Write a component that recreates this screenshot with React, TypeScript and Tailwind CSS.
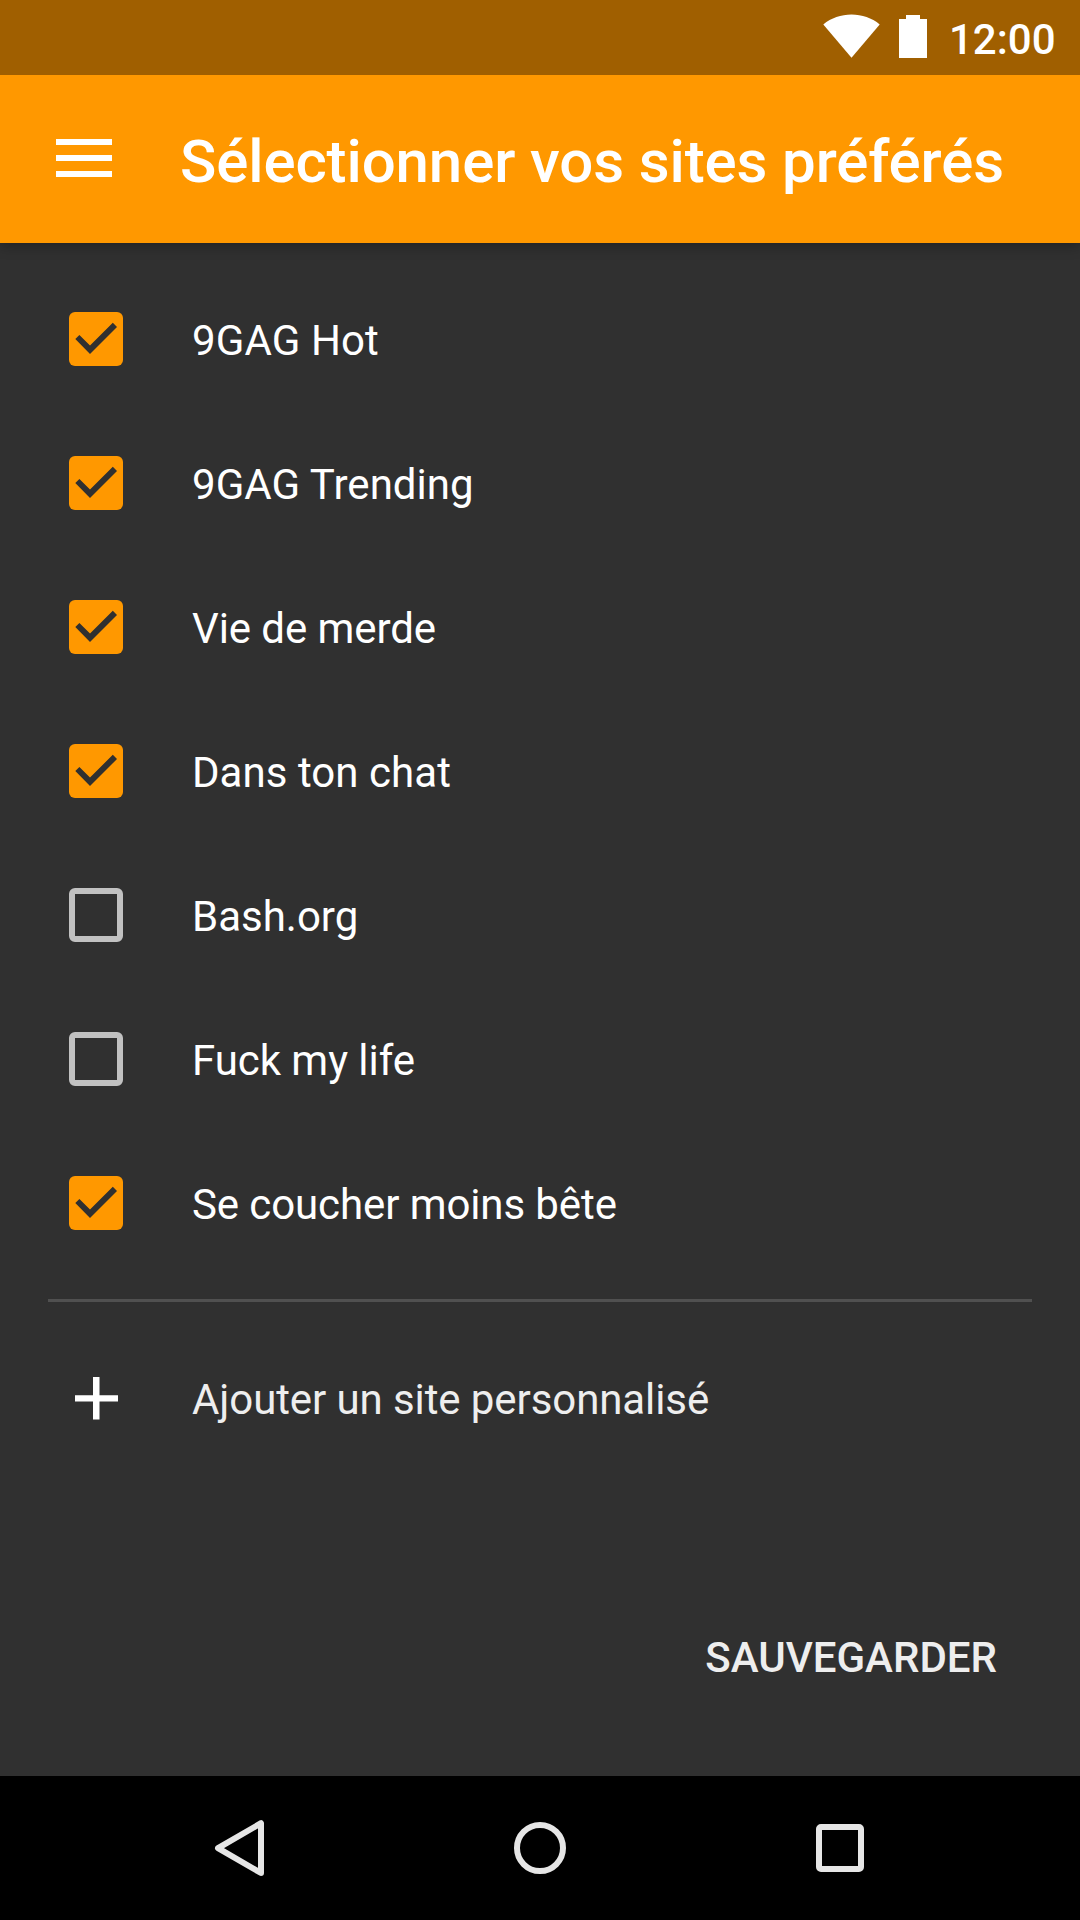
import React from "react";

const sites = [
  { name: "9GAG Hot", checked: true, tracking: "tracking-[0.1px]" },
  { name: "9GAG Trending", checked: true, tracking: "tracking-[0.05px]" },
  { name: "Vie de merde", checked: true, tracking: "tracking-[-0.08px]" },
  { name: "Dans ton chat", checked: true, tracking: "tracking-[0.05px]" },
  { name: "Bash.org", checked: false, tracking: "tracking-normal" },
  { name: "Fuck my life", checked: false, tracking: "tracking-[-0.05px]" },
  { name: "Se coucher moins bête", checked: true, tracking: "tracking-[-0.1px]" },
];

function Checkbox({ checked }: { checked: boolean }) {
  return checked ? (
    <svg className="size-[54px] shrink-0" viewBox="0 0 54 54">
      <rect width="54" height="54" rx="6" fill="#ff9800" />
      <path d="M6.3 27L10.4 22.9L21 33.5L43.8 10.8L48 15L21 42Z" fill="#303030" />
    </svg>
  ) : (
    <div className="size-[54px] shrink-0 rounded-[6px] border-6 border-[#c1c1c1]" />
  );
}

function StatusBar() {
  return (
    <div className="relative z-10 flex h-[75px] items-center bg-[#a05f00] pl-[823px]">
      <svg className="h-[75px] w-[57px] shrink-0" viewBox="0 0 57 75" fill="#fff">
        <path d="M28.5 57.7L0.3 24.4C8.3 18 18 14.6 28.5 14.6S48.7 18 56.7 24.4Z" />
      </svg>
      <svg className="ml-[19px] h-[75px] w-[28px] shrink-0" viewBox="0 0 28 75" fill="#fff">
        <path d="M7 15H21V19H28V58H0V19H7Z" />
      </svg>
      <span className="ml-[22px] pt-[4px] text-[42px] leading-none font-medium">12:00</span>
    </div>
  );
}

function AppBar() {
  return (
    <header className="relative flex h-[168px] items-center bg-[#ff9800] pl-[56px] shadow-[0_3px_12px_rgba(0,0,0,0.3)]">
      <svg className="mb-[2px] h-[38px] w-[56px] shrink-0" viewBox="0 0 56 38" fill="#fff">
        <path d="M0 0H56V6H0ZM0 16H56V22H0ZM0 32H56V38H0Z" />
      </svg>
      <h1 className="ml-[68px] pt-[5px] text-[60px] leading-[70px] font-medium tracking-[-0.12px] whitespace-nowrap">
        Sélectionner vos sites préférés
      </h1>
    </header>
  );
}

function NavigationBar() {
  return (
    <nav className="flex h-[144px] items-center justify-between bg-black pr-[204px] pl-[204px]">
      <svg className="size-[72px]" viewBox="0 0 72 72" fill="none" stroke="#e6e6e6" strokeWidth="6" strokeLinejoin="round">
        <path d="M57 11.2V61L14 36.1Z" />
      </svg>
      <svg className="size-[72px]" viewBox="0 0 72 72" fill="none" stroke="#e6e6e6" strokeWidth="6">
        <circle cx="36" cy="36" r="23" />
      </svg>
      <svg className="size-[72px]" viewBox="0 0 72 72" fill="none" stroke="#e6e6e6" strokeWidth="6" strokeLinejoin="round">
        <rect x="15" y="15" width="42" height="42" rx="2" />
      </svg>
    </nav>
  );
}

export default function App() {
  return (
    <div className="flex h-[1920px] w-[1080px] flex-col overflow-hidden bg-[#303030] font-['Roboto',sans-serif] text-white">
      <StatusBar />
      <AppBar />
      <main className="flex flex-1 flex-col pt-6">
        <ul>
          {sites.map((site) => (
            <li key={site.name} className="flex h-[144px] items-center pl-[69px]">
              <Checkbox checked={site.checked} />
              <span className={`ml-[69px] pt-[3px] text-[42px] leading-[50px] ${site.tracking}`}>{site.name}</span>
            </li>
          ))}
        </ul>
        <div className="mx-12 mt-6 h-[3px] bg-[#505050]" />
        <div className="mt-6 flex h-[144px] items-center pl-[75px]">
          <svg className="size-[43px] shrink-0" viewBox="0 0 43 43" fill="#fff">
            <path d="M18 0H24.5V18.3H43V24.5H24.5V42.5H18V24.5H0V18.3H18Z" />
          </svg>
          <span className="ml-[74px] pt-[3px] text-[42px] leading-[50px] tracking-[-0.09px] text-[#eeeeee]">
            Ajouter un site personnalisé
          </span>
        </div>
        <button className="mt-[163px] mr-[83px] self-end text-[42px] leading-[50px] font-medium text-[#eeeeee]">
          SAUVEGARDER
        </button>
      </main>
      <NavigationBar />
    </div>
  );
}
